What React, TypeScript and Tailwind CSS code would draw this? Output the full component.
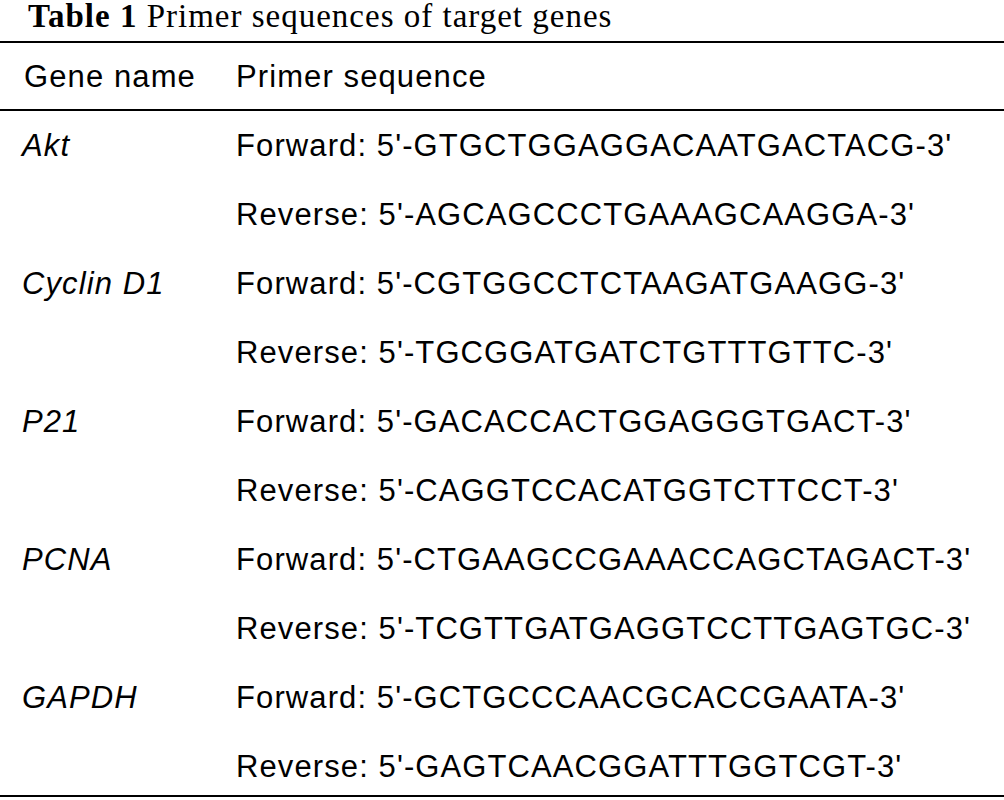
const rows = [
  { gene: 'Akt', fwd: 'GTGCTGGAGGACAATGACTACG', rev: 'AGCAGCCCTGAAAGCAAGGA' },
  { gene: 'Cyclin D1', fwd: 'CGTGGCCTCTAAGATGAAGG', rev: 'TGCGGATGATCTGTTTGTTC' },
  { gene: 'P21', fwd: 'GACACCACTGGAGGGTGACT', rev: 'CAGGTCCACATGGTCTTCCT' },
  { gene: 'PCNA', fwd: 'CTGAAGCCGAAACCAGCTAGACT', rev: 'TCGTTGATGAGGTCCTTGAGTGC' },
  { gene: 'GAPDH', fwd: 'GCTGCCCAACGCACCGAATA', rev: 'GAGTCAACGGATTTGGTCGT' },
];

const lines = rows.flatMap((r) => [
  { gene: r.gene, text: `Forward: 5'-${r.fwd}-3'` },
  { gene: '', text: `Reverse: 5'-${r.rev}-3'` },
]);

export default function App() {
  return (
    <div className="w-[1004px] h-[800px] bg-white text-black overflow-hidden">
      <div className="h-[41px] pl-[28px] font-['Liberation_Serif',serif] text-[33px] leading-[33px] tracking-[1px]">
        <span className="font-bold">Table 1</span> Primer sequences of target genes
      </div>
      <div className="h-[2px] bg-black" />
      <div className="flex pt-[18px] pb-[17px] font-['Liberation_Sans',Arial,sans-serif] text-[31px] leading-[31px] tracking-[1.1px]">
        <div className="w-[236px] pl-[24px] shrink-0">Gene name</div>
        <div>Primer sequence</div>
      </div>
      <div className="h-[2px] bg-black" />
      <div className="font-['Liberation_Sans',Arial,sans-serif] text-[31px] leading-[31px] tracking-[1.1px]">
        {lines.map((l, i) => (
          <div key={i} className="flex pt-[19px] pb-[19px] last:pb-[13px]">
            <div className="w-[236px] pl-[22px] shrink-0 italic">{l.gene}</div>
            <div className="whitespace-nowrap">{l.text}</div>
          </div>
        ))}
      </div>
      <div className="h-[2px] bg-black" />
    </div>
  );
}
